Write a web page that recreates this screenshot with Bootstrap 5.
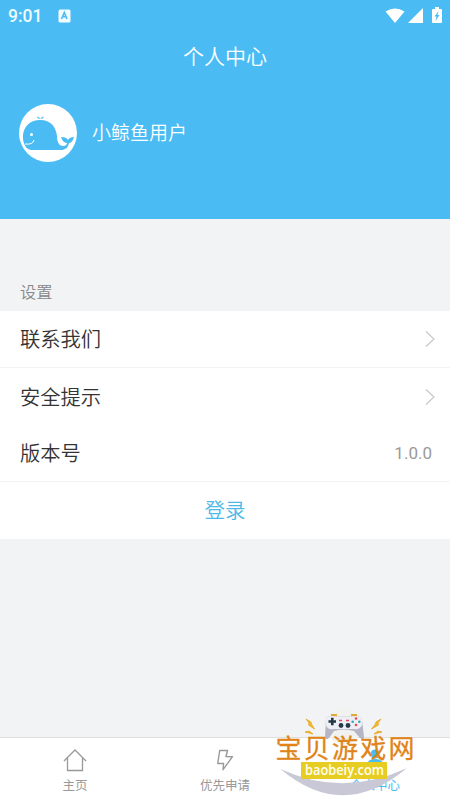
<!DOCTYPE html>
<html lang="zh-CN">
<head>
<meta charset="utf-8">
<meta name="viewport" content="width=device-width, initial-scale=1">
<title>个人中心</title>
<link href="https://cdn.jsdelivr.net/npm/bootstrap@5.3.0/dist/css/bootstrap.min.css" rel="stylesheet">
<style>
body{font-family:"Roboto","Noto Sans CJK SC",sans-serif;background:#f2f3f5;color:#333;height:800px;overflow:hidden}
.hero{height:219px;background:#4abcf3;flex:none}
.statusbar{height:32px;padding:0 7px 0 8px}
.clock{font-size:17.5px;font-weight:500;line-height:32px;color:#eefaff}
.title-bar{height:50px;font-size:21px;font-weight:350;font-family:"Noto Sans CJK SC DemiLight","Noto Sans CJK SC",sans-serif;line-height:47px}
.user{padding:22px 19px 0;gap:15px}
.user-name{font-size:19px;line-height:56px;padding-top:2px}
.section-label{height:92px;padding:0 20px 6px;font-size:16.3px;color:#888;line-height:24px;flex:none}
.setting{height:57px;padding:0 15px 0 20px;font-size:20.3px;line-height:56px}
.setting-name{padding-top:2px}
.thin-text{font-weight:350;font-family:"Roboto","Noto Sans CJK SC DemiLight","Noto Sans CJK SC",sans-serif}
.ruled{border-bottom:1px solid #f3f3f3}
.version{font-size:17px;color:#999;margin-right:3px}
.login{height:57px;font-size:20.5px;line-height:59px;color:#4db8e9}
.tabs{height:63px;border-top:1px solid #dedfe0;font-size:12.5px;color:#999;line-height:18px}
.tab svg{margin-top:9px;margin-bottom:4px}
.active-tab{color:#4abcf3}
.sitemark{position:absolute;left:260px;top:700px}
</style>
<script src="https://cdn.jsdelivr.net/npm/bootstrap@5.3.0/dist/js/bootstrap.bundle.min.js"></script>
</head>
<body class="d-flex flex-column position-relative">
<header class="hero text-white">
  <div class="statusbar d-flex align-items-center">
    <span class="clock">9:01</span>
    <svg class="ms-3" width="13" height="14" viewBox="0 0 13 14"><rect width="12" height="13" x=".5" y=".5" rx="1.500" fill="#f2fbff"/><path d="M3.500 10 6.300 3.500 9 10M4.600 7.800H8" fill="none" stroke="#4abcf3" stroke-width="1.600"/></svg>
    <svg class="ms-auto" width="60" height="18" viewBox="0 0 60 18"><g fill="#fff"><path d="M2.500 4.500Q12 -1.500 21.500 4.500L12 16Z"/><path d="M40 1V16H25Z"/><path d="M52 2V0h4v2h2q1 0 1 1v12q0 1-1 1h-8q-1 0-1-1V3q0-1 1-1Z"/></g><path d="m55.500 4-4 5.500h2L52.500 14l4-6h-2Z" fill="#4abcf3"/></svg>
  </div>
  <div class="title-bar text-center">个人中心</div>
  <div class="user d-flex align-items-center">
    <svg width="58" height="58" viewBox="0 0 58 58"><circle cx="29" cy="29" r="29" fill="#fff"/><path d="M4 35C3 23 11 16 21 16c12 0 16 8 17 16 0 6 2 10 6 10 3 0 4-2 4-3-3 0-5-3-6-6 4 0 6 1 7 3 1-2 3-3 6-3-1 4-3 6-5 6-1 5-4 7-8 7H13C8 46 5 42 4 35Z" fill="#4abcf3"/><circle cx="12.500" cy="30.500" r="1.500" fill="#fff"/><path d="M6 40q8 1 9-4" fill="none" stroke="#fff"/><path d="M18 13.200q1 1.500 2.800 1.300-.3-1.600-2.800-1.300M22 14.500q2 .2 2.700-1.300-2.400-.3-2.700 1.300" fill="#4abcf3" stroke="#4abcf3" stroke-width=".5"/></svg>
    <span class="user-name thin-text">小鲸鱼用户</span>
  </div>
</header>
<div class="section-label thin-text d-flex align-items-end">设置</div>
<main class="bg-white thin-text">
  <div class="setting ruled d-flex align-items-center justify-content-between"><span class="setting-name">联系我们</span><svg width="10" height="18" viewBox="0 0 10 18"><path d="m1 1.500 8 7.500-8 7.500" fill="none" stroke="#c8c8c8" stroke-width="1.200"/></svg></div>
  <div class="setting d-flex align-items-center justify-content-between"><span class="setting-name">安全提示</span><svg width="10" height="18" viewBox="0 0 10 18"><path d="m1 1.500 8 7.500-8 7.500" fill="none" stroke="#c8c8c8" stroke-width="1.200"/></svg></div>
  <div class="setting ruled d-flex align-items-center justify-content-between"><span class="setting-name">版本号</span><span class="version fw-normal">1.0.0</span></div>
  <div class="login text-center">登录</div>
</main>
<nav class="tabs mt-auto bg-white row g-0 text-center">
  <div class="tab col d-flex flex-column align-items-center"><svg width="26" height="26" viewBox="0 0 26 26"><path d="m2 14 11-11 11 11M5.500 11v12.500h15V11" fill="none" stroke="#999" stroke-width="1.300"/></svg>主页</div>
  <div class="tab col d-flex flex-column align-items-center"><svg width="26" height="26" viewBox="0 0 26 26"><path d="M7.700 3.500H15.500L14 9.500l6.500.2L11 22.700l.6-6.200H5.700Z" fill="none" stroke="#999" stroke-width="1.400" stroke-linejoin="round"/></svg>优先申请</div>
  <div class="tab active-tab col d-flex flex-column align-items-center"><svg width="26" height="26" viewBox="0 0 26 26"><circle cx="13" cy="7" r="4.500" fill="#4abcf3"/><path d="M5 17q1-5 8-5t8 5Z" fill="#4abcf3"/></svg>个人中心</div>
</nav>
<svg class="sitemark" width="170" height="100" viewBox="0 0 170 100">
  <circle cx="84" cy="26" r="18" fill="#f1f1ef"/>
  <path d="M20.500 69Q83 98 147 68 83 122 20.500 69Z" fill="#c8c8d6"/>
  <path d="M71 14h6v3h-6ZM91 14h6v3h-6Z" fill="#e3a936"/>
  <path d="M66 19q1-3 6-3 12 1 24 0 5 0 6 4l2 17q0 4-4 1l-6-7q-10-3-20 0l-5 7q-4 3-4-1Z" fill="#b5b5c6"/>
  <path d="M66 19q1-3 6-3 12 1 24 0 5 0 6 4v5q-2 5-8 4H74q-7 1-8-4Z" fill="#eeeef5"/>
  <path d="M68.500 21.500h7.500M72.300 17.700v7.600" stroke="#243746" stroke-width="2.600"/>
  <circle cx="81" cy="25.500" r="2.400" fill="#263b49"/><circle cx="88" cy="25.500" r="2.400" fill="#263b49"/>
  <path d="M79 20.500h3M86 20.500h3" stroke="#e24a61" stroke-width="1.500"/>
  <g fill="#e34a5f"><circle cx="96" cy="18.500" r="1.300"/><circle cx="96" cy="25" r="1.300"/></g><g fill="#38a8ba"><circle cx="92.700" cy="21.800" r="1.300"/><circle cx="99.300" cy="21.800" r="1.300"/></g>
  <path d="m46 19 5 3 .5 2 3 5-6-4 .5-2ZM121 19l-5 3-.5 2-4 5 7-4-.5-2ZM45 32l4-1 4 3-4-1ZM122 32l-4-1-4 3 4-1Z" fill="#f0ba2e" stroke="#e6a723" stroke-width=".8"/>
  <text x="15.500" y="58" textLength="139" lengthAdjust="spacing" font-family="Noto Sans CJK SC,sans-serif" font-size="26" font-weight="400" fill="#df8418" stroke="#df8418" stroke-width=".3">宝贝游戏网</text>
  <path d="M41 62h86v17H41Z" fill="#e7cd22"/>
  <text x="45" y="74.500" textLength="79" lengthAdjust="spacingAndGlyphs" font-family="Open Sans,sans-serif" font-size="15" font-weight="600" fill="#fffef1">baobeiy.com</text>
</svg>
</body>
</html>
